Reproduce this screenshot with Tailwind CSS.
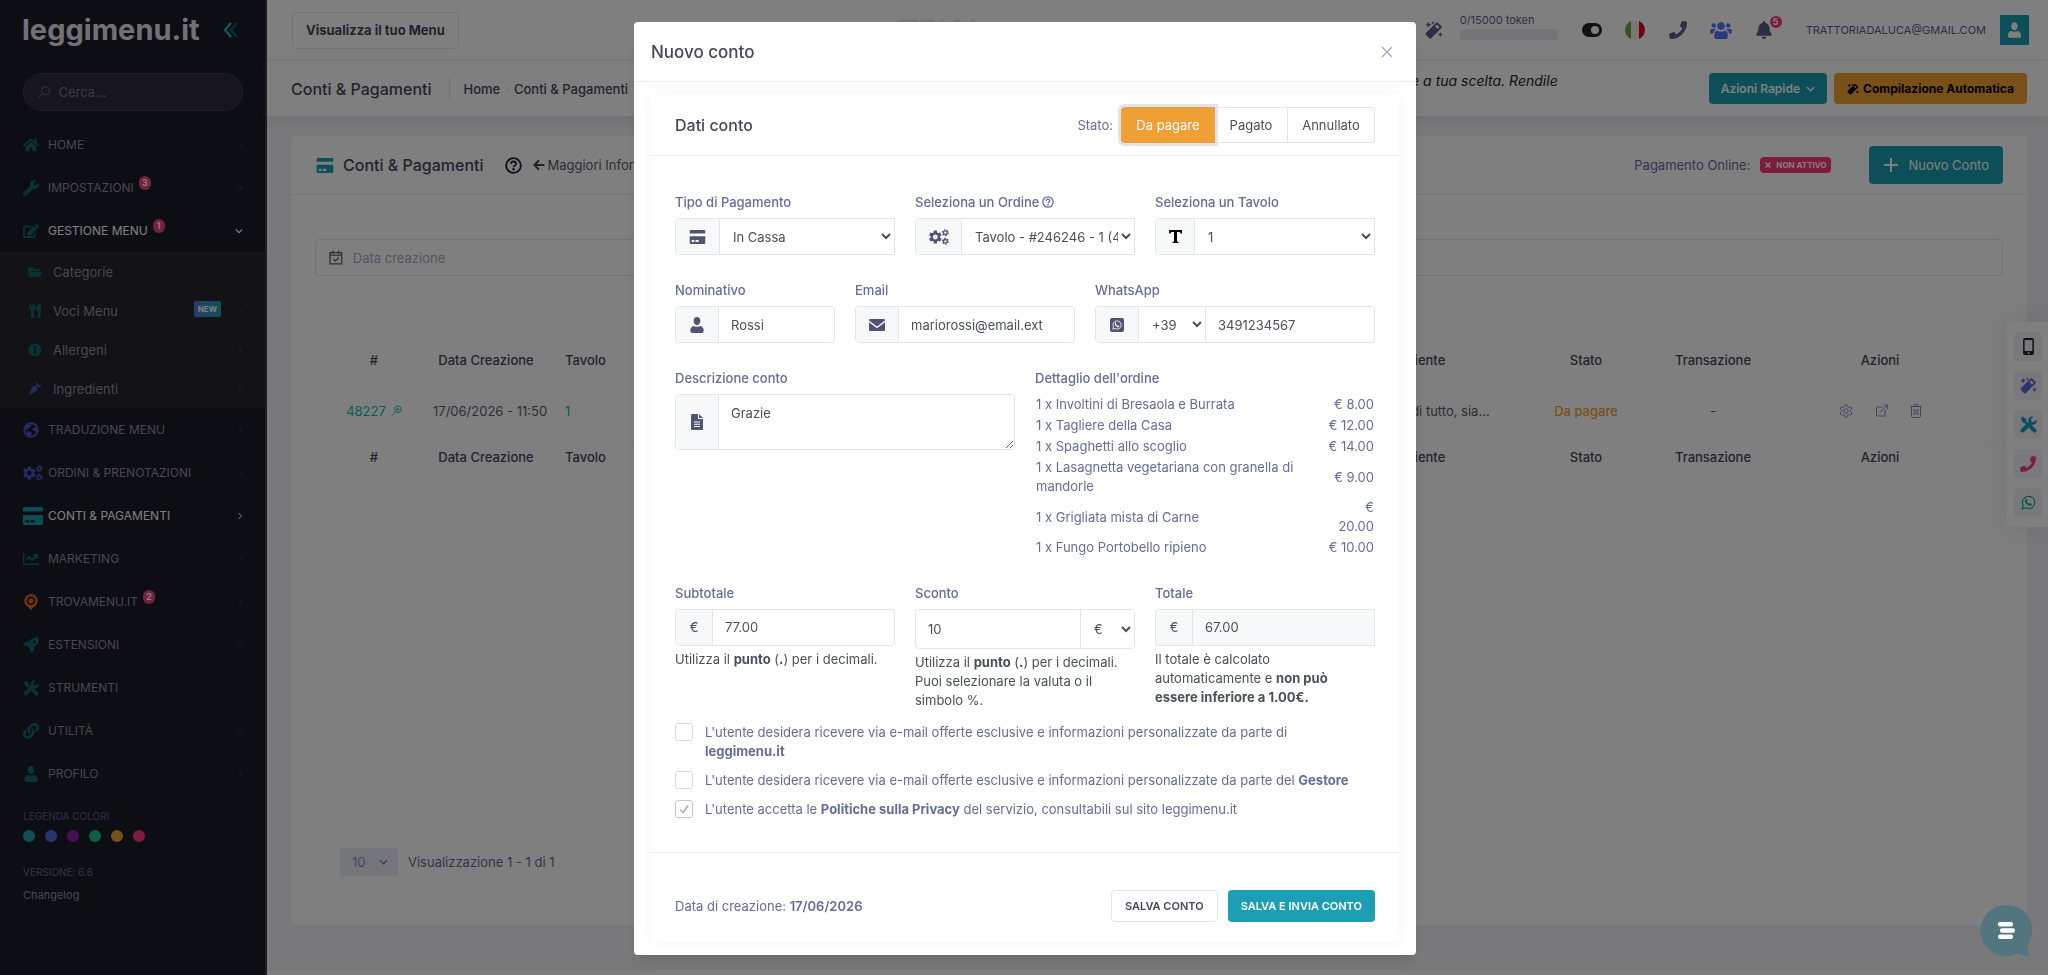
<!DOCTYPE html>
<html lang="it">
<head>
  <meta charset="UTF-8">
  <meta name="viewport" content="width=device-width, initial-scale=1.0">
  <title>Conti &amp; Pagamenti - leggimenu.it</title>
  <script src="https://cdn.jsdelivr.net/npm/@tailwindcss/browser@4"></script>
</head>
<body class="font-['Inter',sans-serif] text-[13px] leading-5 text-[#646c9a] bg-[#f2f3f8] overflow-hidden">

  <!-- Icon sprite -->
  <svg class="hidden" xmlns="http://www.w3.org/2000/svg">
    <symbol id="i-home" viewBox="0 0 576 512"><path d="M280.37 148.26L96 300.11V464a16 16 0 0 0 16 16l112.06-.29a16 16 0 0 0 15.92-16V368a16 16 0 0 1 16-16h64a16 16 0 0 1 16 16v95.64a16 16 0 0 0 16 16.05L464 480a16 16 0 0 0 16-16V300L295.67 148.26a12.19 12.19 0 0 0-15.3 0zM571.6 251.47L488 182.56V44.05a12 12 0 0 0-12-12h-56a12 12 0 0 0-12 12v72.61L318.47 43a48 48 0 0 0-61 0L4.34 251.47a12 12 0 0 0-1.6 16.9l25.5 31A12 12 0 0 0 45.15 301l235.22-193.74a12.19 12.19 0 0 1 15.3 0L530.9 301a12 12 0 0 0 16.9-1.6l25.5-31a12 12 0 0 0-1.7-16.93z"/></symbol>
    <symbol id="i-wrench" viewBox="0 0 512 512"><path d="M507.73 109.1c-2.24-9.03-13.54-12.09-20.12-5.51l-74.36 74.36-67.88-11.31-11.31-67.88 74.36-74.36c6.62-6.62 3.43-17.9-5.66-20.16-47.38-11.74-99.55.91-136.58 37.93-39.64 39.64-50.55 97.1-34.05 147.2L18.74 402.76c-24.99 24.99-24.99 65.51 0 90.5 24.99 24.99 65.51 24.99 90.5 0l213.21-213.21c50.12 16.71 107.47 5.68 147.37-34.22 37.07-37.07 49.7-89.32 37.91-136.73zM64 472c-13.25 0-24-10.75-24-24 0-13.26 10.75-24 24-24s24 10.74 24 24c0 13.25-10.75 24-24 24z"/></symbol>
    <symbol id="i-edit" viewBox="0 0 576 512"><path d="M402.6 83.2l90.2 90.2c3.8 3.8 3.8 10 0 13.8L274.4 405.6l-92.8 10.3c-12.4 1.4-22.9-9.1-21.5-21.5l10.3-92.8L388.8 83.2c3.8-3.8 10-3.8 13.8 0zm162-22.9l-48.8-48.8c-15.2-15.2-39.9-15.2-55.2 0l-35.4 35.4c-3.8 3.8-3.8 10 0 13.8l90.2 90.2c3.8 3.8 10 3.8 13.8 0l35.4-35.4c15.2-15.3 15.2-40 0-55.2zM384 346.2V448H64V128h229.8c3.2 0 6.2-1.3 8.5-3.5l40-40c7.6-7.6 2.2-20.5-8.5-20.5H48C21.5 64 0 85.5 0 112v352c0 26.5 21.5 48 48 48h352c26.5 0 48-21.5 48-48V306.2c0-10.7-12.9-16-20.5-8.5l-40 40c-2.2 2.3-3.5 5.3-3.5 8.5z"/></symbol>
    <symbol id="i-folder" viewBox="0 0 576 512"><path d="M572.694 292.093L500.27 416.248A63.997 63.997 0 0 1 444.989 448H45.025c-18.523 0-30.064-20.093-20.731-36.093l72.424-124.155A64 64 0 0 1 152 256h399.964c18.523 0 30.064 20.093 20.73 36.093zM152 224h328v-48c0-26.51-21.49-48-48-48H272l-64-64H48C21.49 64 0 85.49 0 112v278.046l69.077-118.418C86.214 242.25 117.989 224 152 224z"/></symbol>
    <symbol id="i-utensils" viewBox="0 0 416 512"><path d="M207.9 15.2c.8 4.7 16.1 94.5 16.1 128.8 0 52.3-27.8 89.6-68.9 104.6L168 486.7c.7 13.7-10.2 25.3-24 25.3H80c-13.7 0-24.7-11.5-24-25.3l12.9-238.1C27.7 233.6 0 196.2 0 144 0 109.6 15.3 19.9 16.1 15.2 19.3-5.1 61.4-5.4 64 16.3v141.2c1.3 3.4 15.1 3.2 16 0 1.4-25.3 7.9-139.2 8-141.8 3.3-20.8 44.7-20.8 47.9 0 .2 2.7 6.6 116.5 8 141.8.9 3.2 14.8 3.4 16 0V16.3c2.6-21.6 44.8-21.4 47.9-1.1zm119.2 285.7l-15 185.1c-1.2 14 9.9 26 23.9 26h56c13.3 0 24-10.7 24-24V24c0-13.2-10.7-24-24-24-82.5 0-221.4 178.5-64.9 300.9z"/></symbol>
    <symbol id="i-info" viewBox="0 0 24 24"><path fill-rule="evenodd" d="M12 1a11 11 0 1 0 0 22 11 11 0 0 0 0-22zm-1.900 4.500h3.800v3.200h-3.800zm0 4.800h3.800v8h-3.800z"/></symbol>
    <symbol id="i-carrot" viewBox="0 0 24 24"><path d="M1 23.500L7 10c1.500-3.200 5-4 7.500-1.500 2.400 2.500 1.700 6-1.500 7.500z"/><path d="M15 7.500c-1.500-2.500-1-5 .8-6.500 1.500 1.300 2 2.800 1.700 4.300 1.600-.6 3.600-.4 5.500 1.400-1.700 2-4.300 2.700-6.800 1.800z"/></symbol>
    <symbol id="i-globe" viewBox="0 0 24 24"><circle cx="12" cy="12" r="10" fill="none" stroke="currentColor" stroke-width="3"/><path d="M5 6c3-2 6-2.500 8-1.500-.5 2-2.500 2.500-3.500 4s-3 1-3.500 3-2.500.5-3-1zM15 9c2-1.500 5-1 6 1 .5 2.500 0 4-1 5-2-.5-2.500-2-4.500-2.500S13.500 10.500 15 9zM7 14c3-.5 6 1 6 3s-1 3-2 4c-3-.5-5-3-6-5z"/></symbol>
    <symbol id="i-gear" viewBox="0 0 24 24"><path d="M19.140 12.940c.04-.3.06-.61.06-.94 0-.32-.02-.64-.07-.94l2.030-1.580c.18-.14.23-.41.12-.61l-1.920-3.320c-.12-.22-.37-.29-.59-.22l-2.390.96c-.5-.38-1.030-.7-1.620-.94l-.36-2.540c-.04-.24-.24-.41-.48-.41h-3.840c-.24 0-.43.17-.47.41l-.36 2.540c-.59.24-1.130.57-1.620.94l-2.390-.96c-.22-.08-.47 0-.59.22L2.740 8.870c-.12.21-.08.47.12.61l2.030 1.580c-.05.3-.09.63-.09.94s.02.64.07.94l-2.030 1.580c-.18.14-.23.41-.12.61l1.920 3.320c.12.22.37.29.59.22l2.390-.96c.5.38 1.030.7 1.620.94l.36 2.540c.05.24.24.41.48.41h3.840c.24 0 .44-.17.47-.41l.36-2.540c.59-.24 1.130-.56 1.620-.94l2.390.96c.22.08.47 0 .59-.22l1.920-3.320c.12-.22.07-.47-.12-.61l-2.010-1.580zM12 15.600c-1.980 0-3.600-1.620-3.600-3.600s1.620-3.600 3.600-3.600 3.600 1.620 3.600 3.600-1.620 3.600-3.600 3.600z"/></symbol>
    <symbol id="i-cogs" viewBox="0 0 30 24"><use href="#i-gear" x="-2.500" y="0" width="24" height="24"/><g fill="none" stroke="currentColor"><circle cx="24.500" cy="5.500" r="2.800" stroke-width="2"/><circle cx="24.500" cy="5.500" r="4.400" stroke-width="1.800" stroke-dasharray="2.300 2.300"/><circle cx="24.500" cy="18.500" r="2.800" stroke-width="2"/><circle cx="24.500" cy="18.500" r="4.400" stroke-width="1.800" stroke-dasharray="2.300 2.300"/></g></symbol>
    <symbol id="i-card" viewBox="0 0 20 18"><path fill-rule="evenodd" d="M1.500 0h17A1.500 1.500 0 0 1 20 1.500V4.500H0V1.500A1.500 1.500 0 0 1 1.500 0zM0 8h20v8.500a1.500 1.500 0 0 1-1.500 1.500h-17A1.500 1.500 0 0 1 0 16.500zM2.500 13v2.500h3.500V13zm5 0v2.500h4V13z"/></symbol>
    <symbol id="i-chart" viewBox="0 0 512 512"><path d="M496 400H48V80c0-8-6-14-14-14H14C6 66 0 72 0 80v336c0 17.670 14.330 32 32 32h464c8.840 0 16-7 16-14v-20c0-8-7-14-16-14zM464 96H345.940c-21.380 0-32.090 25.850-16.970 40.970l32.400 32.400L288 242.750l-73.370-73.370c-12.500-12.500-32.760-12.500-45.250 0l-68.690 68.690c-6.250 6.250-6.250 16.380 0 22.630l22.620 22.620c6.250 6.250 16.380 6.250 22.630 0L192 237.250l73.370 73.370c12.500 12.500 32.760 12.500 45.250 0l96-96 32.400 32.400c15.120 15.120 40.970 4.410 40.970-16.970V112c.01-8.840-7.150-16-15.990-16z"/></symbol>
    <symbol id="i-pin" viewBox="0 0 18 20"><path fill-rule="evenodd" d="M9 0a8.500 8.500 0 0 0-8.500 8.500C.5 13 4 15 9 20c5-5 8.500-7 8.500-11.500A8.500 8.500 0 0 0 9 0zm0 3.200a5.300 5.300 0 1 1 0 10.600A5.300 5.300 0 0 1 9 3.200z"/><circle cx="9" cy="8.500" r="3.200"/></symbol>
    <symbol id="i-rocket" viewBox="0 0 24 24"><path fill-rule="evenodd" d="M23.500.5C16 0 12 2.500 9.500 6.500L3.500 7 .5 13l5 .3L11 18.500l-.5 5 6-2.500.5-6.200C22 12 24 8 23.500.5zM17 5a2.200 2.200 0 1 1 0 4.400A2.200 2.200 0 0 1 17 5z"/></symbol>
    <symbol id="i-tools" viewBox="0 0 24 24"><path d="M1 3L4 .8 9 5v3l3 3-2.500 2.500L6.500 10.200 4 9.500zM14 12.500l2.500.2 6.500 6.500c1.800 2.300-1.700 5.600-4 3.900L12.500 16.500z"/><path d="M23.500 5.500l-4.200 3-3.200-.8-.8-3.100 3.200-4C14 0 10.500 3.500 12 8L1.200 18.600c-2.200 2.600 1.600 6.300 4.200 4.200L16 12.300c5 1.200 8.300-2.500 7.500-6.800z"/></symbol>
    <symbol id="i-link" viewBox="0 0 512 512"><path d="M326.612 185.391c59.747 59.809 58.927 155.698.36 214.590-.11.12-.24.25-.36.37l-67.200 67.200c-59.270 59.270-155.699 59.262-214.960 0-59.270-59.260-59.270-155.700 0-214.960l37.106-37.106c9.840-9.840 26.786-3.300 27.294 10.606.648 17.722 3.826 35.527 9.690 52.721 1.986 5.822.567 12.262-3.783 16.612l-13.087 13.087c-28.026 28.026-28.905 73.660-1.155 101.960 28.024 28.579 74.086 28.749 102.325.51l67.200-67.190c28.191-28.191 28.073-73.757 0-101.830-3.701-3.694-7.429-6.564-10.341-8.569a16.037 16.037 0 0 1-6.947-12.606c-.396-10.567 3.348-21.456 11.698-29.806l21.054-21.055c5.521-5.521 14.182-6.199 20.584-1.731a152.482 152.482 0 0 1 20.522 17.197zM467.547 44.449c-59.261-59.262-155.690-59.270-214.960 0l-67.200 67.200c-.12.12-.25.25-.36.37-58.566 58.892-59.387 154.781.36 214.590a152.454 152.454 0 0 0 20.521 17.196c6.402 4.468 15.064 3.789 20.584-1.731l21.054-21.055c8.350-8.350 12.094-19.239 11.698-29.806a16.037 16.037 0 0 0-6.947-12.606c-2.912-2.005-6.640-4.875-10.341-8.569-28.073-28.073-28.191-73.639 0-101.830l67.200-67.190c28.239-28.239 74.300-28.069 102.325.51 27.750 28.300 26.872 73.934-1.155 101.960l-13.087 13.087c-4.350 4.350-5.769 10.790-3.783 16.612 5.864 17.194 9.042 34.999 9.690 52.721.509 13.906 17.454 20.446 27.294 10.606l37.106-37.106c59.271-59.259 59.271-155.699.001-214.959z"/></symbol>
    <symbol id="i-user" viewBox="0 0 15 18"><path d="M7.500 0c2.300 0 3.800 1.700 3.800 4.300S9.600 9.200 7.500 9.200 3.700 6.900 3.700 4.300 5.200 0 7.500 0zM3.500 10.200c2.500 1.200 5.500 1.200 8 0 2.500.8 3.500 2.500 3.500 5.300 0 1.700-.8 2.500-2.300 2.500H2.300C.8 18 0 17.200 0 15.500c0-2.800 1-4.500 3.500-5.300z"/></symbol>
    <symbol id="i-users" viewBox="0 0 24 20"><circle cx="4" cy="5" r="2.500"/><circle cx="20" cy="5" r="2.500"/><circle cx="12" cy="5.500" r="4.200"/><path d="M7.200 10.800c3 1.700 6.600 1.700 9.600 0 1.900.6 2.700 2 2.700 4.200v2.500c0 1.500-.8 2.500-2.500 2.500H7c-1.700 0-2.500-1-2.500-2.500V15c0-2.200.8-3.600 2.700-4.200zM1.500 9h4l.7.7C4 10.800 3.300 12.200 3 14H0v-3.200C0 9.700.5 9 1.500 9zM22.500 9h-4l-.7.7c2.200 1.100 2.900 2.500 3.200 4.300h3v-3.200c0-1.100-.5-1.800-1.500-1.800z"/></symbol>
    <symbol id="i-phone" viewBox="0 0 512 512"><path d="M493.400 24.600l-104-24c-11.300-2.600-22.900 3.300-27.500 13.900l-48 112c-4.200 9.800-1.400 21.300 6.900 28l60.600 49.600c-36 76.700-98.900 140.500-177.200 177.200l-49.600-60.600c-6.800-8.300-18.200-11.100-28-6.900l-112 48C3.900 366.500-2 378.100.6 389.400l24 104C27.100 504.200 36.700 512 48 512c256.100 0 464-207.500 464-464 0-11.200-7.700-20.900-18.600-23.400z"/></symbol>
    <symbol id="i-bell" viewBox="0 0 448 512"><path d="M224 512c35.320 0 63.970-28.650 63.970-64H160.030c0 35.350 28.650 64 63.970 64zm215.390-149.710c-19.320-20.760-55.470-51.990-55.470-154.290 0-77.700-54.480-139.900-127.940-155.160V32c0-17.670-14.320-32-31.980-32s-31.980 14.330-31.980 32v20.840C118.560 68.100 64.080 130.300 64.080 208c0 102.300-36.150 133.530-55.470 154.290-6 6.450-8.660 14.160-8.610 21.710.11 16.400 12.980 32 32.100 32h383.800c19.120 0 32-15.600 32.100-32 .05-7.550-2.610-15.270-8.610-21.710z"/></symbol>
    <symbol id="i-wand" viewBox="0 0 24 24"><path fill-rule="evenodd" d="M17.500 2.500l4 4c.9.9.9 2 0 3L8.500 22.500c-.9.900-2 .900-3 0l-4-4c-.9-.9-.9-2 0-3L14.500 2.500c.9-.9 2-.9 3 0zM13.500 7l3.500 3.500 2.300-2.300L16 4.800z"/><path d="M4.500 1l1.200 2.800L8.500 5 5.700 6.200 4.500 9 3.300 6.200.5 5l2.800-1.200zM10.500 0l.7 1.800 1.800.7-1.800.7-.7 1.800-.7-1.800L8 2.500l1.800-.7zM20.500 14.500l1 2.500 2.500 1-2.500 1-1 2.500-1-2.500-2.500-1 2.500-1z"/></symbol>
    <symbol id="i-question" viewBox="0 0 24 24"><g fill="none" stroke="currentColor" stroke-width="2.600"><circle cx="12" cy="12" r="10.400"/><path d="M8.500 9.500c0-2 1.500-3.200 3.500-3.200s3.600 1.200 3.600 3.100c0 2.400-3.500 2.500-3.500 5"/></g><circle cx="12" cy="17.400" r="1.700"/></symbol>
    <symbol id="i-arrow" viewBox="0 0 12 12"><path fill="none" stroke="currentColor" stroke-width="2" d="M11.500 6H2M6 1.300L1.500 6 6 10.700"/></symbol>
    <symbol id="i-right" viewBox="0 0 8 10"><path fill="none" stroke="currentColor" stroke-width="1.300" d="M2 1l4 4-4 4"/></symbol>
    <symbol id="i-down" viewBox="0 0 10 8"><path fill="none" stroke="currentColor" stroke-width="1.500" d="M1 2l4 4 4-4"/></symbol>
    <symbol id="i-calendar" viewBox="0 0 14 15"><path fill="none" stroke="currentColor" stroke-width="1.300" d="M1 2.500h12v11.500H1zM1 5h12M4 .5v3M10 .5v3M4.500 9l2 2 3.500-3.500"/></symbol>
    <symbol id="i-search" viewBox="0 0 14 14"><path fill="none" stroke="currentColor" stroke-width="1.100" d="M8.500 1a4.500 4.500 0 1 1 0 9 4.500 4.500 0 0 1 0-9zM5.300 8.700L1 13"/></symbol>
    <symbol id="i-whatsapp" viewBox="0 0 24 24"><path fill="none" stroke="currentColor" stroke-width="2" d="M2 22l1.500-5.300A9.900 9.900 0 1 1 7.200 20.500z"/><path d="M8 6.500c.6-.4 1.300-.3 1.600.3l.9 2c.2.600-.8 1.400-.8 1.800.8 1.600 2 2.700 3.600 3.400.5.100 1.300-1.200 1.900-1l2 1c.5.300.3 1.800-.4 2.500-1 .9-2.600 1-4.500.200-2.800-1.200-5-3.700-5.600-5.700-.5-1.800.2-3.700 1.300-4.500z"/></symbol>
    <symbol id="i-mobile" viewBox="0 0 14 22"><path fill-rule="evenodd" d="M2.500 0h9A2.500 2.500 0 0 1 14 2.500v17a2.500 2.500 0 0 1-2.500 2.500h-9A2.500 2.500 0 0 1 0 19.500v-17A2.500 2.500 0 0 1 2.500 0zM2 2.500v14.200h10V2.500zM7 18a1.300 1.300 0 1 0 0 2.600A1.300 1.300 0 0 0 7 18z"/></symbol>
  </svg>

  <div class="flex min-h-screen">

    <!-- Sidebar -->
    <aside class="w-[267px] shrink-0 bg-[#191c27] text-[#8e8fa2] border-r-2 border-[#3c3d45]">
      <div class="flex items-center justify-between pl-[22px] pr-[26px] h-[60px]">
        <a href="#" class="text-[29px] leading-[40px] font-bold text-[#e4e4ea]">leggimenu.it</a>
        <button type="button" aria-label="Riduci menu" class="text-[#1dc4c8]">
          <svg class="w-4 h-4" viewBox="0 0 16 16" fill="none" stroke="currentColor" stroke-width="2"><path d="M8 1L2 8l6 7"/><path d="M14 1L8 8l6 7" opacity=".4"/></svg>
        </button>
      </div>
      <label class="flex items-center gap-2 mt-[13px] ml-[23px] mr-[22px] h-[38px] px-[14px] rounded-full bg-[#2c2d38] border border-[#3a3b47] text-[#73748a]">
        <svg class="w-[14px] h-[14px] fill-current"><use href="#i-search"/></svg>
        <input type="text" aria-label="Cerca" placeholder="Cerca..." class="w-full outline-none placeholder-[#73748a]">
      </label>
      <nav id="menu" class="mt-3"></nav>
      <div class="pl-[23px] pt-[13px] text-[10px]">
        <p class="leading-4 text-[#5f6090]">LEGENDA COLORI</p>
        <div class="flex gap-[10px] mt-[6px]">
          <span class="w-3 h-3 rounded-full bg-[#18a5ab]"></span>
          <span class="w-3 h-3 rounded-full bg-[#5867dd]"></span>
          <span class="w-3 h-3 rounded-full bg-[#8d1fa8]"></span>
          <span class="w-3 h-3 rounded-full bg-[#1dc088]"></span>
          <span class="w-3 h-3 rounded-full bg-[#f0a030]"></span>
          <span class="w-3 h-3 rounded-full bg-[#fd397a]"></span>
        </div>
        <p class="mt-[22px] leading-4 text-[#6a6b8a]">VERSIONE: 6.6</p>
        <a href="#" class="block mt-[7px] text-[11px] leading-4">Changelog</a>
      </div>
    </aside>

    <div class="flex-1 min-w-0 flex flex-col">
      <!-- Topbar -->
      <header class="flex items-center h-[61px] pl-[25px] pr-[19px] bg-white border-b border-[#f0f0f5]">
        <button type="button" class="h-[37px] px-[13px] border border-[#e6e7ee] rounded text-[#48465b] font-bold">Visualizza il tuo Menu</button>
        <span class="flex-1 text-center text-[30px] font-bold text-[#646c9a]/15">TRIAL</span>
        <div class="flex items-center text-[#595d8c]">
          <svg class="w-[18px] h-[18px] fill-current mr-[17px]"><use href="#i-wand"/></svg>
          <div class="w-[98px] mr-6">
            <p class="text-[11px] leading-4 -mt-2">0/15000 token</p>
            <div class="h-[11px] rounded bg-[#e6e8ef] mt-px"></div>
          </div>
          <button type="button" aria-label="Tema" class="flex justify-end items-center w-5 h-[14px] px-[3px] rounded-full bg-[#22222c] mr-[23px]"><span class="w-2 h-2 rounded-full bg-white"></span></button>
          <svg class="w-5 h-5 rounded-full mr-6" viewBox="0 0 20 20"><path fill="#6da544" d="M0 0h6v20H0z"/><path fill="#f0f0f0" d="M6 0h8v20H6z"/><path fill="#d80027" d="M14 0h6v20h-6z"/></svg>
          <svg class="w-[18px] h-[18px] fill-current mr-[23px]"><use href="#i-phone"/></svg>
          <svg class="w-[22px] h-[18px] fill-[#5078f0] mr-6"><use href="#i-users"/></svg>
          <span class="relative mr-[34px]">
            <svg class="w-4 h-[18px] fill-current"><use href="#i-bell"/></svg>
            <span class="absolute -top-[5px] left-[14px] w-3 h-3 rounded-full bg-[#fd397a] text-white text-[9px] leading-3 font-bold text-center">5</span>
          </span>
          <span class="text-[11px] mr-[14px]">TRATTORIADALUCA@GMAIL.COM</span>
          <span class="flex items-center justify-center w-[29px] h-[30px] bg-[#1a9fb0]"><svg class="w-[13px] h-4 fill-white"><use href="#i-user"/></svg></span>
        </div>
      </header>

      <!-- Subheader -->
      <div class="flex items-center h-[55px] pl-6 pr-[21px] bg-white shadow-[0_3px_12px_rgba(82,63,105,0.12)] text-[#48465b]">
        <h1 class="text-base font-medium pr-[18px] border-r border-[#e2e2ee]">Conti &amp; Pagamenti</h1>
        <a href="#" class="ml-[13px] font-medium">Home</a>
        <span class="mx-[5px] text-[#c5c7dd]">·</span>
        <a href="#" class="font-medium">Conti &amp; Pagamenti</a>
        <p class="ml-auto mr-[151px] -mt-4 text-sm italic text-[#222230]">Crea menu per le lingue a tua scelta. Rendile</p>
        <button type="button" class="flex items-center gap-[6px] h-[31px] px-3 rounded bg-[#1a9fb0] text-white text-xs font-semibold">Azioni Rapide <svg class="w-[9px] h-2"><use href="#i-down"/></svg></button>
        <button type="button" class="flex items-center gap-1 h-[31px] ml-[7px] px-[13px] rounded bg-[#f3a02f] text-black text-xs font-bold"><svg class="w-3 h-3 fill-current"><use href="#i-wand"/></svg> Compilazione Automatica</button>
      </div>

      <!-- Card -->
      <main class="flex-1 flex flex-col mt-5 ml-6 mr-[21px] mb-[45px] bg-white rounded">
        <div class="flex items-center h-[59px] px-6 border-b border-[#ebedf2]">
          <svg class="w-5 h-[15px] fill-[#1a9fb0]"><use href="#i-card"/></svg>
          <h2 class="ml-2 text-base font-medium text-[#48465b]">Conti &amp; Pagamenti</h2>
          <svg class="w-[17px] h-[17px] ml-[22px] fill-current text-[#22222c]"><use href="#i-question"/></svg>
          <svg class="w-3 h-3 ml-[11px] text-[#48465b]"><use href="#i-arrow"/></svg>
          <span class="ml-[2px] text-[#595d6e]">Maggiori Informazioni</span>
          <span class="ml-auto">Pagamento Online:</span>
          <span class="flex items-center gap-1 h-4 ml-[10px] px-1 rounded-sm bg-[#fd397a] text-white text-[8px] font-bold"><svg class="w-2 h-2" viewBox="0 0 8 8" stroke="currentColor" stroke-width="1.500"><path d="M1.500 1.500l5 5M6.500 1.500l-5 5"/></svg>NON ATTIVO</span>
          <button type="button" class="flex items-center gap-[10px] h-[38px] ml-[38px] px-[14px] rounded bg-[#1a9fb0] text-white"><svg class="w-4 h-4" viewBox="0 0 16 16" stroke="currentColor" stroke-width="2"><path d="M8 1v14M1 8h14"/></svg>Nuovo Conto</button>
        </div>
        <div class="flex-1 flex flex-col px-6 pt-11">
          <label class="flex items-center gap-[10px] h-[37px] px-[13px] border border-[#e2e5ec] rounded">
            <svg class="w-[14px] h-[15px] text-[#595d6e]"><use href="#i-calendar"/></svg>
            <input type="text" aria-label="Data creazione" placeholder="Data creazione" class="w-full outline-none placeholder-[#a7abc3]">
          </label>
          <table class="table-fixed w-full mt-16 text-center text-[#595d6e]">
            <colgroup>
              <col class="w-[118px]"><col class="w-[106px]"><col class="w-[120px]"><col><col class="w-[192px]"><col class="w-[166px]"><col class="w-[88px]"><col class="w-[246px]">
            </colgroup>
            <thead class="text-[#48465b]">
              <tr class="h-10"><th class="font-medium">#</th><th class="font-medium">Data Creazione</th><th class="font-medium text-left pl-[26px]">Tavolo</th><th></th><th class="font-medium">Note Cliente</th><th class="font-medium">Stato</th><th class="font-medium">Transazione</th><th class="font-medium">Azioni</th></tr>
            </thead>
            <tbody>
              <tr class="h-[62px] border-b border-[#f7f8fa]">
                <td class="text-[#0abba0]"><a href="#" class="inline-flex items-center gap-[5px]">48227 <svg class="w-[11px] h-[11px]" viewBox="0 0 12 12" fill="none" stroke="currentColor"><path d="M7.500 1a3.600 3.600 0 1 1 0 7.200 3.600 3.600 0 0 1 0-7.200zM5 7.500L1 11.500M7.500 3v3.400M5.800 4.700h3.400"/></svg></a></td>
                <td class="whitespace-nowrap">17/06/2026 - 11:50</td>
                <td class="text-left pl-[26px] text-[#0abba0]">1</td><td></td>
                <td class="whitespace-nowrap">Contentissimi di tutto, sia...</td>
                <td class="font-medium text-[#f3a02f]">Da pagare</td><td>-</td>
                <td>
                  <div class="flex justify-center gap-[22px] text-[#8c8cc8]">
                    <svg class="w-[14px] h-[14px]" viewBox="0 0 24 24" fill="none" stroke="currentColor" stroke-width="1.700"><path d="M10 1.500h4l.7 3 2.500 1.400 3-.9 2 3.500-2.300 2.100v2.800l2.300 2.100-2 3.500-3-.9-2.500 1.400-.7 3h-4l-.7-3-2.500-1.400-3 .9-2-3.500 2.300-2.100v-2.800L1.800 8.500l2-3.500 3 .9 2.500-1.400z"/><circle cx="12" cy="12" r="3.800"/></svg>
                    <svg class="w-[13px] h-[13px]" viewBox="0 0 13 13" fill="none" stroke="currentColor"><path d="M7.500 3H1.500v9H10V6M5 8.500L12 1.500M8.500 1H12.500v4"/></svg>
                    <svg class="w-[12px] h-[14px]" viewBox="0 0 12 14" fill="none" stroke="currentColor"><path d="M.5 2.500h11M4 2.500V.7h4v1.800M1.500 2.500v9.500c0 1 .5 1.500 1.500 1.500h6c1 0 1.500-.5 1.500-1.500V2.500M4 5v6M6 5v6M8 5v6"/></svg>
                  </div>
                </td>
              </tr>
            </tbody>
            <tfoot class="text-[#48465b]">
              <tr class="h-[30px]"><th class="font-medium">#</th><th class="font-medium">Data Creazione</th><th class="font-medium text-left pl-[26px]">Tavolo</th><th></th><th class="font-medium">Note Cliente</th><th class="font-medium">Stato</th><th class="font-medium">Transazione</th><th class="font-medium">Azioni</th></tr>
            </tfoot>
          </table>
          <div class="flex items-center gap-[10px] mt-auto mb-[49px] pl-[25px]">
            <span class="relative">
              <select aria-label="Righe per pagina" class="appearance-none w-[58px] h-7 pl-3 rounded bg-[#e9ecf9] text-[#8c90c0]"><option>10</option></select>
              <svg class="absolute right-[10px] top-[10px] w-[9px] h-2 text-[#7a7fae]"><use href="#i-down"/></svg>
            </span>
            <span>Visualizzazione 1 - 1 di 1</span>
          </div>
        </div>
      </main>
      <footer class="h-[5px] bg-white"></footer>
    </div>
  </div>

  <!-- Quick tools rail -->
  <div class="fixed right-0 top-[322px] flex flex-col gap-[10px] w-[42px] py-[10px] pl-2 bg-white shadow-[0_0_30px_rgba(82,63,105,0.15)]">
    <button type="button" aria-label="Anteprima" class="flex items-center justify-center w-7 h-[29px] rounded bg-[#f2f3f8]"><svg class="w-[11px] h-[17px] fill-[#22222c]"><use href="#i-mobile"/></svg></button>
    <button type="button" aria-label="Compilazione" class="flex items-center justify-center w-7 h-[29px] rounded bg-[#f2f3f8]"><svg class="w-[17px] h-[17px] fill-[#5867dd]"><use href="#i-wand"/></svg></button>
    <button type="button" aria-label="Strumenti" class="flex items-center justify-center w-7 h-[29px] rounded bg-[#f2f3f8]"><svg class="w-[17px] h-[17px] fill-[#1a9fb0]"><use href="#i-tools"/></svg></button>
    <button type="button" aria-label="Telefono" class="flex items-center justify-center w-7 h-[29px] rounded bg-[#f2f3f8]"><svg class="w-[16px] h-[16px] fill-[#fd397a]"><use href="#i-phone"/></svg></button>
    <button type="button" aria-label="WhatsApp" class="flex items-center justify-center w-7 h-[29px] rounded bg-[#f2f3f8]"><svg class="w-[15px] h-[15px] fill-current text-[#1bb07a]"><use href="#i-whatsapp"/></svg></button>
  </div>

  <!-- Modal -->
  <div class="fixed inset-0 flex items-start justify-center pt-[22px] pl-[2px] bg-black/50">
    <form class="w-full max-w-[782px] rounded bg-white text-[#495057] shadow-lg">
      <div class="flex items-center justify-between h-[60px] px-[17px] border-b border-[#ebedf2]">
        <h3 class="text-[17px] font-medium text-[#48465b]">Nuovo conto</h3>
        <button type="button" aria-label="Chiudi" class="px-[6px] text-[#a1a8c3]"><svg class="w-3 h-3" viewBox="0 0 12 12" stroke="currentColor" stroke-width="1.300"><path d="M1 1l10 10M11 1L1 11"/></svg></button>
      </div>

      <div class="mx-[17px] mt-3 mb-[13px] shadow-[0_0_13px_rgba(82,63,105,0.05)]">
        <div class="flex items-center h-[62px] px-6 border-b border-[#ebedf2]">
          <h4 class="flex-1 text-base font-medium text-[#48465b]">Dati conto</h4>
          <span class="mr-2 text-[#646c9a]">Stato:</span>
          <div class="flex">
            <button type="button" class="h-9 w-[94px] rounded-l bg-[#f09f34] text-white ring-3 ring-[#dfe4ee]">Da pagare</button>
            <button type="button" class="h-9 w-[73px] border-y border-r border-[#e2e5ec]">Pagato</button>
            <button type="button" class="h-9 w-[87px] border-y border-r rounded-r border-[#e2e5ec]">Annullato</button>
          </div>
        </div>

        <div class="px-6 pt-9 pb-[33px]">
          <div class="grid grid-cols-12 gap-x-5">
            <div class="col-span-4">
              <label for="tipo" class="block mb-[6px] font-medium text-[#646c9a]">Tipo di Pagamento</label>
              <div class="flex h-[37px] border border-[#e2e5ec] rounded-l">
                <span class="flex items-center justify-center w-11 shrink-0 bg-[#f7f8fa] border-r border-[#e2e5ec]"><svg class="w-[17px] h-[14px] fill-[#4f5472]"><use href="#i-card"/></svg></span>
                <select id="tipo" class="flex-1 min-w-0 pl-[9px] bg-white"><option>In Cassa</option></select>
              </div>
            </div>
            <div class="col-span-4">
              <label for="ordine" class="flex items-center gap-[3px] mb-[6px] font-medium text-[#646c9a]">Seleziona un Ordine <svg class="w-3 h-3 fill-current"><use href="#i-question"/></svg></label>
              <div class="flex h-[37px] border border-[#e2e5ec] rounded-l">
                <span class="flex items-center justify-center w-[46px] shrink-0 bg-[#f7f8fa] border-r border-[#e2e5ec]"><svg class="w-5 h-4 fill-current text-[#4f5472]"><use href="#i-cogs"/></svg></span>
                <select id="ordine" class="flex-1 min-w-0 pl-[9px] bg-white"><option>Tavolo - #246246 - 1 (4 persone)</option></select>
              </div>
            </div>
            <div class="col-span-4">
              <label for="tavolo" class="block mb-[6px] font-medium text-[#646c9a]">Seleziona un Tavolo</label>
              <div class="flex h-[37px] border border-[#e2e5ec] rounded-l">
                <span class="flex items-center justify-center w-[39px] shrink-0 bg-[#f7f8fa] border-r border-[#e2e5ec]"><svg class="w-[13px] h-[13px]" viewBox="0 0 13 13"><path d="M0 0h13v3.500h-1.500L11 2H8v9.500l1.500.5v1h-6v-1l1.500-.5V2H2l-.5 1.500H0z"/></svg></span>
                <select id="tavolo" class="flex-1 min-w-0 pl-[9px] bg-white"><option>1</option></select>
              </div>
            </div>
          </div>

          <div class="grid grid-cols-12 gap-x-5 mt-[25px]">
            <div class="col-span-3">
              <label for="nominativo" class="block mb-[6px] font-medium text-[#646c9a]">Nominativo</label>
              <div class="flex h-[37px] border border-[#e2e5ec] rounded overflow-hidden">
                <span class="flex items-center justify-center w-[43px] shrink-0 bg-[#f7f8fa] border-r border-[#e2e5ec]"><svg class="w-[14px] h-4 fill-[#4f5472]"><use href="#i-user"/></svg></span>
                <input id="nominativo" type="text" value="Rossi" class="flex-1 min-w-0 px-3">
              </div>
            </div>
            <div class="col-span-4">
              <label for="email" class="block mb-[6px] font-medium text-[#646c9a]">Email</label>
              <div class="flex h-[37px] border border-[#e2e5ec] rounded overflow-hidden">
                <span class="flex items-center justify-center w-[43px] shrink-0 bg-[#f7f8fa] border-r border-[#e2e5ec]"><svg class="w-4 h-3" viewBox="0 0 16 12" fill="#4f5472"><path d="M1.500 0h13C15.500 0 16 .5 16 1.500L8 7.500 0 1.500C0 .5.500 0 1.500 0zM0 3.300l8 6 8-6v7.200c0 1-.5 1.500-1.500 1.500h-13C.5 12 0 11.500 0 10.500z"/></svg></span>
                <input id="email" type="email" value="mariorossi@email.ext" class="flex-1 min-w-0 px-3">
              </div>
            </div>
            <div class="col-span-5">
              <label for="whatsapp" class="block mb-[6px] font-medium text-[#646c9a]">WhatsApp</label>
              <div class="flex h-[37px] border border-[#e2e5ec] rounded overflow-hidden">
                <span class="flex items-center justify-center w-[43px] shrink-0 bg-[#f7f8fa] border-r border-[#e2e5ec]"><span class="flex items-center justify-center w-[14px] h-[14px] rounded-xs bg-[#4f5472] text-white"><svg class="w-[10px] h-[10px] fill-current"><use href="#i-whatsapp"/></svg></span></span>
                <select aria-label="Prefisso" class="w-[67px] pl-[9px] bg-white border-r border-[#e2e5ec]"><option>+39</option></select>
                <input id="whatsapp" type="tel" value="3491234567" class="flex-1 min-w-0 px-3">
              </div>
            </div>
          </div>

          <div class="grid grid-cols-12 gap-x-5 mt-[25px]">
            <div class="col-span-6">
              <label for="descrizione" class="block mb-[6px] font-medium text-[#646c9a]">Descrizione conto</label>
              <div class="flex h-14 border border-[#e2e5ec] rounded overflow-hidden">
                <span class="flex items-center justify-center w-[43px] shrink-0 bg-[#f7f8fa] border-r border-[#e2e5ec]"><svg class="w-3 h-4" viewBox="0 0 12 16"><path fill="#4f5472" fill-rule="evenodd" d="M1.500 0H7v5h5v9.500c0 1-.5 1.500-1.500 1.500h-9C.5 16 0 15.500 0 14.500v-13C0 .5.500 0 1.500 0zM8 0l4 4H8zM3 7.500v1h6v-1zm0 2.300v1h6v-1zm0 2.300v1h6v-1z"/></svg></span>
                <textarea id="descrizione" class="flex-1 min-w-0 px-3 py-2 resize">Grazie</textarea>
              </div>
            </div>
            <div class="col-span-6 text-[#646c9a]">
              <p class="mb-[6px] font-medium">Dettaglio dell'ordine</p>
              <table class="w-full leading-[19px]">
                <tbody>
                  <tr><td class="p-px">1 x Involtini di Bresaola e Burrata</td><td class="p-px w-12 text-right whitespace-nowrap">€ 8.00</td></tr>
                  <tr><td class="p-px">1 x Tagliere della Casa</td><td class="p-px text-right whitespace-nowrap">€ 12.00</td></tr>
                  <tr><td class="p-px">1 x Spaghetti allo scoglio</td><td class="p-px text-right whitespace-nowrap">€ 14.00</td></tr>
                  <tr><td class="p-px">1 x Lasagnetta vegetariana con granella di mandorle</td><td class="p-px text-right whitespace-nowrap">€ 9.00</td></tr>
                  <tr><td class="p-px">1 x Grigliata mista di Carne</td><td class="p-px text-right">€<br>20.00</td></tr>
                  <tr><td class="p-px">1 x Fungo Portobello ripieno</td><td class="p-px text-right whitespace-nowrap">€ 10.00</td></tr>
                </tbody>
              </table>
            </div>
          </div>

          <div class="grid grid-cols-12 gap-x-5 mt-[25px] leading-[19px]">
            <div class="col-span-4">
              <label for="subtotale" class="block mb-[6px] leading-5 font-medium text-[#646c9a]">Subtotale</label>
              <div class="flex h-[37px] border border-[#e2e5ec] rounded overflow-hidden">
                <span class="flex items-center justify-center w-[37px] shrink-0 bg-[#f7f8fa] border-r border-[#e2e5ec]">€</span>
                <input id="subtotale" type="text" value="77.00" class="flex-1 min-w-0 px-3">
              </div>
              <p class="mt-1">Utilizza il <b>punto</b> (<b>.</b>) per i decimali.</p>
            </div>
            <div class="col-span-4">
              <label for="sconto" class="block mb-[6px] leading-5 font-medium text-[#646c9a]">Sconto</label>
              <div class="flex h-10 border border-[#e2e5ec] rounded overflow-hidden">
                <input id="sconto" type="text" value="10" class="flex-1 min-w-0 px-3">
                <select aria-label="Valuta" class="w-[54px] pl-[9px] bg-white border-l border-[#e2e5ec]"><option>€</option><option>%</option></select>
              </div>
              <p class="mt-1">Utilizza il <b>punto</b> (<b>.</b>) per i decimali. Puoi selezionare la valuta o il simbolo %.</p>
            </div>
            <div class="col-span-4">
              <label for="totale" class="block mb-[6px] leading-5 font-medium text-[#646c9a]">Totale</label>
              <div class="flex h-[37px] border border-[#e2e5ec] rounded-l bg-[#f7f8fa]">
                <span class="flex items-center justify-center w-[37px] shrink-0 border-r border-[#e2e5ec]">€</span>
                <input id="totale" type="text" value="67.00" readonly class="flex-1 min-w-0 px-3">
              </div>
              <p class="mt-1">Il totale è calcolato automaticamente e <b>non può<br>essere inferiore a 1.00€.</b></p>
            </div>
          </div>

          <div class="flex flex-col gap-[10px] mt-[13px] leading-[19px] text-[#646c9a]">
            <label class="flex gap-3"><input type="checkbox" class="appearance-none w-[18px] h-[18px] shrink-0 border border-[#d1d7e2] rounded-[3px]"><span>L'utente desidera ricevere via e-mail offerte esclusive e informazioni personalizzate da parte di <b class="block">leggimenu.it</b></span></label>
            <label class="flex gap-3"><input type="checkbox" class="appearance-none w-[18px] h-[18px] shrink-0 border border-[#d1d7e2] rounded-[3px]"><span>L'utente desidera ricevere via e-mail offerte esclusive e informazioni personalizzate da parte del <b>Gestore</b></span></label>
            <label class="relative flex gap-3"><input type="checkbox" checked disabled class="appearance-none w-[18px] h-[18px] shrink-0 border border-[#c4c9d6] rounded-[3px]"><svg class="absolute left-1 top-1 w-[10px] h-[10px]" viewBox="0 0 10 10" fill="none" stroke="#a9afc0" stroke-width="1.500"><path d="M1 5.500L4 8.500 9 1.500"/></svg><span>L'utente accetta le <b>Politiche sulla Privacy</b> del servizio, consultabili sul sito leggimenu.it</span></label>
          </div>
        </div>

        <div class="flex items-center px-6 pt-[37px] pb-5 border-t border-[#ebedf2]">
          <p class="flex-1 text-[#646c9a]">Data di creazione: <b class="font-semibold">17/06/2026</b></p>
          <button type="button" class="h-8 px-[13px] border border-[#e2e5ec] rounded text-[11px] font-semibold text-[#48465b]">SALVA CONTO</button>
          <button type="submit" class="h-8 ml-[10px] px-[13px] rounded bg-[#1c9fb2] text-[11px] font-semibold text-white">SALVA E INVIA CONTO</button>
        </div>
      </div>
    </form>
  </div>

  <!-- Chat bubble -->
  <button type="button" aria-label="Chat" class="fixed right-[15px] bottom-[17px]">
    <svg class="w-[53px] h-[54px]" viewBox="0 0 53 54"><path fill="#52757f" d="M26 1a25.500 25.500 0 1 0 11 48.500l12 3-2-10.500A25.500 25.500 0 0 0 26 1z"/></svg>
    <svg class="absolute left-[18px] top-[18px] w-[17px] h-[17px]" viewBox="0 0 17 17" fill="#fff"><rect width="15" height="4.500" rx="2"/><rect x="2" y="6.200" width="15" height="4.500" rx="2"/><rect y="12.400" width="15" height="4.500" rx="2"/></svg>
  </button>

  <script>
    const TEAL = 'text-[#10696b]';
    const BLUE = 'text-[#4a58c4]';
    const items = [
      { label: 'HOME', icon: 'home', color: TEAL },
      { label: 'IMPOSTAZIONI', icon: 'wrench', color: TEAL, badge: 3 },
      { label: 'GESTIONE MENU', icon: 'edit', color: TEAL, badge: 1, active: true, open: true, children: [
        { label: 'Categorie', icon: 'folder', color: TEAL },
        { label: 'Voci Menu', icon: 'utensils', color: TEAL, isNew: true },
        { label: 'Allergeni', icon: 'info', color: TEAL },
        { label: 'Ingredienti', icon: 'carrot', color: BLUE }
      ] },
      { label: 'TRADUZIONE MENU', icon: 'globe', color: BLUE },
      { label: 'ORDINI & PRENOTAZIONI', icon: 'cogs', color: BLUE },
      { label: 'CONTI & PAGAMENTI', icon: 'card', color: 'text-[#149aa6]', active: true },
      { label: 'MARKETING', icon: 'chart', color: TEAL },
      { label: 'TROVAMENU.IT', icon: 'pin', color: 'text-[#e0661c]', badge: 2 },
      { label: 'ESTENSIONI', icon: 'rocket', color: TEAL },
      { label: 'STRUMENTI', icon: 'tools', color: TEAL },
      { label: 'UTILITÀ', icon: 'link', color: TEAL },
      { label: 'PROFILO', icon: 'user', color: TEAL }
    ];

    const arrow = i => i.open
      ? '<svg class="w-2 h-2 ml-auto"><use href="#i-down"/></svg>'
      : `<svg class="w-[6px] h-2 ml-auto ${i.active ? '' : 'opacity-30'}"><use href="#i-right"/></svg>`;

    function row(i) {
      const badge = i.badge ? `<span class="w-3 h-[14px] ml-[5px] mb-[10px] rounded-full bg-[#e8447c] text-white text-[9px] leading-[14px] font-bold text-center">${i.badge}</span>` : '';
      return `<a href="#" class="flex items-center h-[43px] pl-[23px] pr-[22px] text-xs ${i.active ? 'text-white' : ''}">
        <span class="w-[25px] shrink-0 ${i.color}"><svg class="fill-current ${i.icon === 'cogs' || i.icon === 'card' ? 'w-5 h-[18px]' : 'w-4 h-4'}"><use href="#i-${i.icon}"/></svg></span>
        <span>${i.label.replace('&', '&amp;')}</span>${badge}${arrow(i)}</a>`;
    }

    function subRow(i) {
      const tag = i.isNew ? '<span class="ml-auto mr-4 mb-1 px-1 h-4 rounded-xs bg-linear-to-r from-[#5078e0] to-[#1a9fb0] text-white text-[8px] leading-4 font-bold">NEW</span>' : '';
      return `<a href="#" class="flex items-center h-[39px] pl-7 pr-[22px]">
        <span class="w-[25px] shrink-0 ${i.color}"><svg class="w-[14px] h-[14px] fill-current"><use href="#i-${i.icon}"/></svg></span>
        <span>${i.label}</span>${tag}<svg class="w-[6px] h-2 opacity-30 ${i.isNew ? '' : 'ml-auto'}"><use href="#i-right"/></svg></a>`;
    }

    document.getElementById('menu').innerHTML = items.map(i =>
      row(i) + (i.children ? `<div class="bg-[#27242f]">${i.children.map(subRow).join('')}</div>` : '')
    ).join('');
  </script>
</body>
</html>
